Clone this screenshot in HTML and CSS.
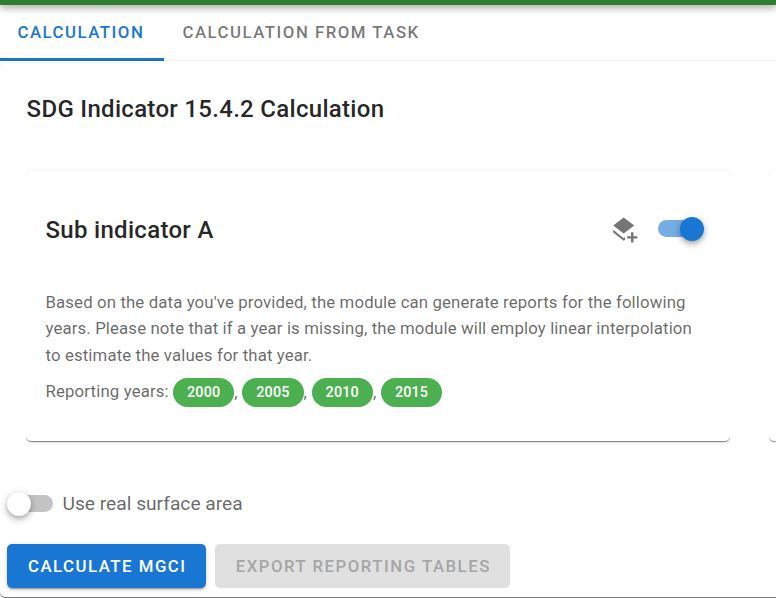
FILE: index.html
```html
<!DOCTYPE html>
<html lang="en">
<head>
<meta charset="utf-8">
<title>SDG Indicator 15.4.2 Calculation</title>
<link rel="stylesheet" href="styles.css">
</head>
<body>
<header class="app-bar"></header>
<nav class="tabs">
  <a class="tab tab-active">CALCULATION</a>
  <a class="tab">CALCULATION FROM TASK</a>
</nav>
<main class="panel">
  <h1 class="title">SDG Indicator 15.4.2 Calculation</h1>
  <div class="cards">
    <section class="card">
      <div class="card-head">
        <h2 class="card-title">Sub indicator A</h2>
        <svg class="layers" viewBox="0 0 24 24"><path d="M10.5 2 1.8 8.7l8.7 6.7 8.7-6.7zM1.8 12.3v2.1l8.7 6.9 1.1-.8v-2.2l-1.1.9zM16.6 14.3h2v3.2h3.2v2h-3.2v3.2h-2v-3.2h-3.2v-2h3.2z"/></svg>
        <span class="switch switch-on"><span class="thumb"></span></span>
      </div>
      <p class="description">Based on the data you've provided, the module can generate reports for the following<br>years. Please note that if a year is missing, the module will employ linear interpolation<br>to estimate the values for that year.</p>
      <div class="years"><span class="label">Reporting years:</span><span class="chip">2000</span><span class="comma">,</span><span class="chip">2005</span><span class="comma">,</span><span class="chip">2010</span><span class="comma">,</span><span class="chip">2015</span></div>
    </section>
    <section class="card card-next"></section>
  </div>
  <div class="option"><span class="switch"><span class="thumb"></span></span><span class="option-label">Use real surface area</span></div>
  <div class="actions">
    <button class="btn btn-primary">CALCULATE MGCI</button>
    <button class="btn btn-disabled" disabled>EXPORT REPORTING TABLES</button>
  </div>
</main>
</body>
</html>
```
FILE: styles.css
```css
* { box-sizing: border-box; }
body {
  margin: 0;
  height: 598px;
  overflow: hidden;
  display: flex;
  flex-direction: column;
  background: #fff;
  font-family: Roboto, sans-serif;
  color: rgba(0, 0, 0, .87);
}
.app-bar {
  flex: none;
  height: 5px;
  background: #2e7d32;
  box-shadow: 0 2px 5px -1px rgba(0, 0, 0, .35), 0 5px 6px rgba(0, 0, 0, .14), 0 1px 12px rgba(0, 0, 0, .12);
  z-index: 1;
}
.tabs { flex: none; display: flex; height: 56px; }
.tab {
  height: 56px;
  padding: 0 19px 0 18.5px;
  font-size: 16.8px;
  font-weight: 500;
  letter-spacing: 1.5px;
  line-height: 55px;
  color: rgba(0, 0, 0, .54);
  white-space: nowrap;
}
.tab-active {
  width: 164px;
  padding: 0 0 0 17.5px;
  color: #1976d2;
  border-bottom: 3px solid #1976d2;
}
.panel {
  flex: none;
  height: 536px;
  border-radius: 5px 0 0 5px;
  box-shadow: 0 -1px 1px rgba(0, 0, 0, .06), 0 1px 0 #777;
}
.title, .card-title {
  margin: 0;
  font-size: 24px;
  font-weight: 500;
  letter-spacing: .3px;
  line-height: 38px;
}
.title { padding: 29px 0 0 26.6px; }
.cards {
  display: flex;
  gap: 39px;
  margin: 33px 0 -10px;
  padding: 10px 0 10px 26px;
  overflow: hidden;
}
.card {
  flex: none;
  width: 704px;
  height: 270px;
  padding: 39px 26px 0 19.5px;
  border-radius: 5px;
  box-shadow: 0 4px 1px -3px rgba(0, 0, 0, .2), 0 1px 1px rgba(0, 0, 0, .32), 0 1px 5px rgba(0, 0, 0, .12);
  clip-path: inset(-10px 0);
}
.card-next { width: 8px; padding: 0; border-radius: 5px 0 0 5px; }
.card-head { display: flex; align-items: center; height: 38px; }
.card-title { flex: 1; position: relative; top: 1px; }
.layers { width: 29px; height: 29px; fill: #757575; margin-right: 18px; }
.switch { position: relative; width: 46px; height: 24px; }
.switch::before {
  content: "";
  position: absolute;
  inset: 3px 0 4px 3px;
  border-radius: 9px;
  background: #c4c4c4;
}
.switch-on::before { inset: 3px 3px 4px 0; background: #75ade4; }
.thumb {
  position: absolute;
  left: 0;
  top: 0;
  width: 24px;
  height: 24px;
  border-radius: 50%;
  background: #fff;
  box-shadow: 0 2px 5px -1px rgba(0, 0, 0, .25), 0 4px 6px rgba(0, 0, 0, .14), 0 1px 11px rgba(0, 0, 0, .12);
}
.switch-on .thumb { left: auto; right: 0; background: #1976d2; }
.description {
  margin: 41px 0 0;
  font-size: 16.8px;
  line-height: 26.4px;
  letter-spacing: .124px;
  color: rgba(0, 0, 0, .6);
  white-space: nowrap;
}
.years {
  display: flex;
  align-items: center;
  height: 29px;
  margin-top: 9.3px;
  font-size: 16.8px;
  letter-spacing: .14px;
  color: rgba(0, 0, 0, .6);
}
.label { width: 127.5px; padding-bottom: 2px; white-space: nowrap; }
.comma { width: 8px; }
.chip {
  width: 61.3px;
  height: 29px;
  border-radius: 15px;
  background: #4caf50;
  color: #fff;
  font-size: 14.4px;
  font-weight: 500;
  line-height: 29px;
  letter-spacing: .15px;
  text-align: center;
}
.option { display: flex; align-items: center; height: 30px; margin: 48px 0 0 7px; }
.option-label { margin-left: 9.5px; padding-bottom: 2px; font-size: 19.2px; color: rgba(0, 0, 0, .6); }
.actions { display: flex; gap: 9px; margin: 25px 0 0 7px; }
.btn {
  height: 44px;
  padding: 0 0 0 1.5px;
  border: 0;
  border-radius: 5px;
  font: 500 16.8px Roboto, sans-serif;
  letter-spacing: 1.5px;
}
.btn-primary {
  width: 199px;
  background: #1976d2;
  color: #fff;
  box-shadow: 0 3px 1px -2px rgba(0, 0, 0, .2), 0 2px 2px rgba(0, 0, 0, .14), 0 1px 6px rgba(0, 0, 0, .12);
}
.btn-disabled { width: 295px; background: #e0e0e0; color: #a6a6a6; }
```
